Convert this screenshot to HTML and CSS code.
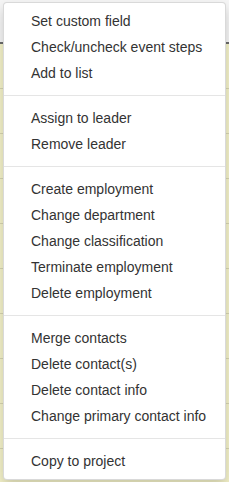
FILE: index.html
```html
<!DOCTYPE html>
<html>
<head>
<meta charset="utf-8">
<link rel="stylesheet" href="styles.css">
</head>
<body>
<div class="page">
  <div class="head"></div>
  <div class="rows">
    <div class="row"></div>
    <div class="row"></div>
    <div class="row"></div>
    <div class="row"></div>
    <div class="row"></div>
    <div class="row"></div>
    <div class="row"></div>
    <div class="row"></div>
    <div class="row"></div>
    <div class="row"></div>
  </div>
</div>
<ul class="menu">
  <li class="item">Set custom field</li>
  <li class="item">Check/uncheck event steps</li>
  <li class="item">Add to list</li>
  <li class="divider"></li>
  <li class="item">Assign to leader</li>
  <li class="item">Remove leader</li>
  <li class="divider"></li>
  <li class="item">Create employment</li>
  <li class="item">Change department</li>
  <li class="item">Change classification</li>
  <li class="item">Terminate employment</li>
  <li class="item">Delete employment</li>
  <li class="divider"></li>
  <li class="item">Merge contacts</li>
  <li class="item">Delete contact(s)</li>
  <li class="item">Delete contact info</li>
  <li class="item">Change primary contact info</li>
  <li class="divider"></li>
  <li class="item">Copy to project</li>
</ul>
</body>
</html>
```
FILE: styles.css
```css
html, body {
  margin: 0;
  padding: 0;
}
body {
  width: 229px;
  height: 482px;
  overflow: hidden;
  position: relative;
  font-family: "Liberation Sans", Arial, sans-serif;
  background: #f4f2c9;
}
.page {
  display: flex;
  flex-direction: column;
  height: 482px;
}
.head {
  height: 42px;
  background: #f5f5f5;
  border-bottom: 2px solid #6b6b6b;
  flex: none;
}
.rows {
  display: flex;
  flex-direction: column;
}
.row {
  height: 44px;
  border-bottom: 1px solid #d6d4b0;
  background: #f4f2c9;
}
.menu {
  position: absolute;
  left: 3px;
  top: 2px;
  width: 223px;
  box-sizing: border-box;
  margin: 0;
  padding: 5px 0;
  list-style: none;
  background: #fff;
  border: 1px solid rgba(0,0,0,0.15);
  border-radius: 4px;
  box-shadow: 0 6px 12px rgba(0,0,0,0.175);
}
.item {
  padding: 3px 10px 3px 27px;
  font-size: 14px;
  line-height: 20px;
  color: #333;
  white-space: nowrap;
}
.divider {
  height: 1px;
  margin: 9px 0;
  background: #e5e5e5;
}
```
